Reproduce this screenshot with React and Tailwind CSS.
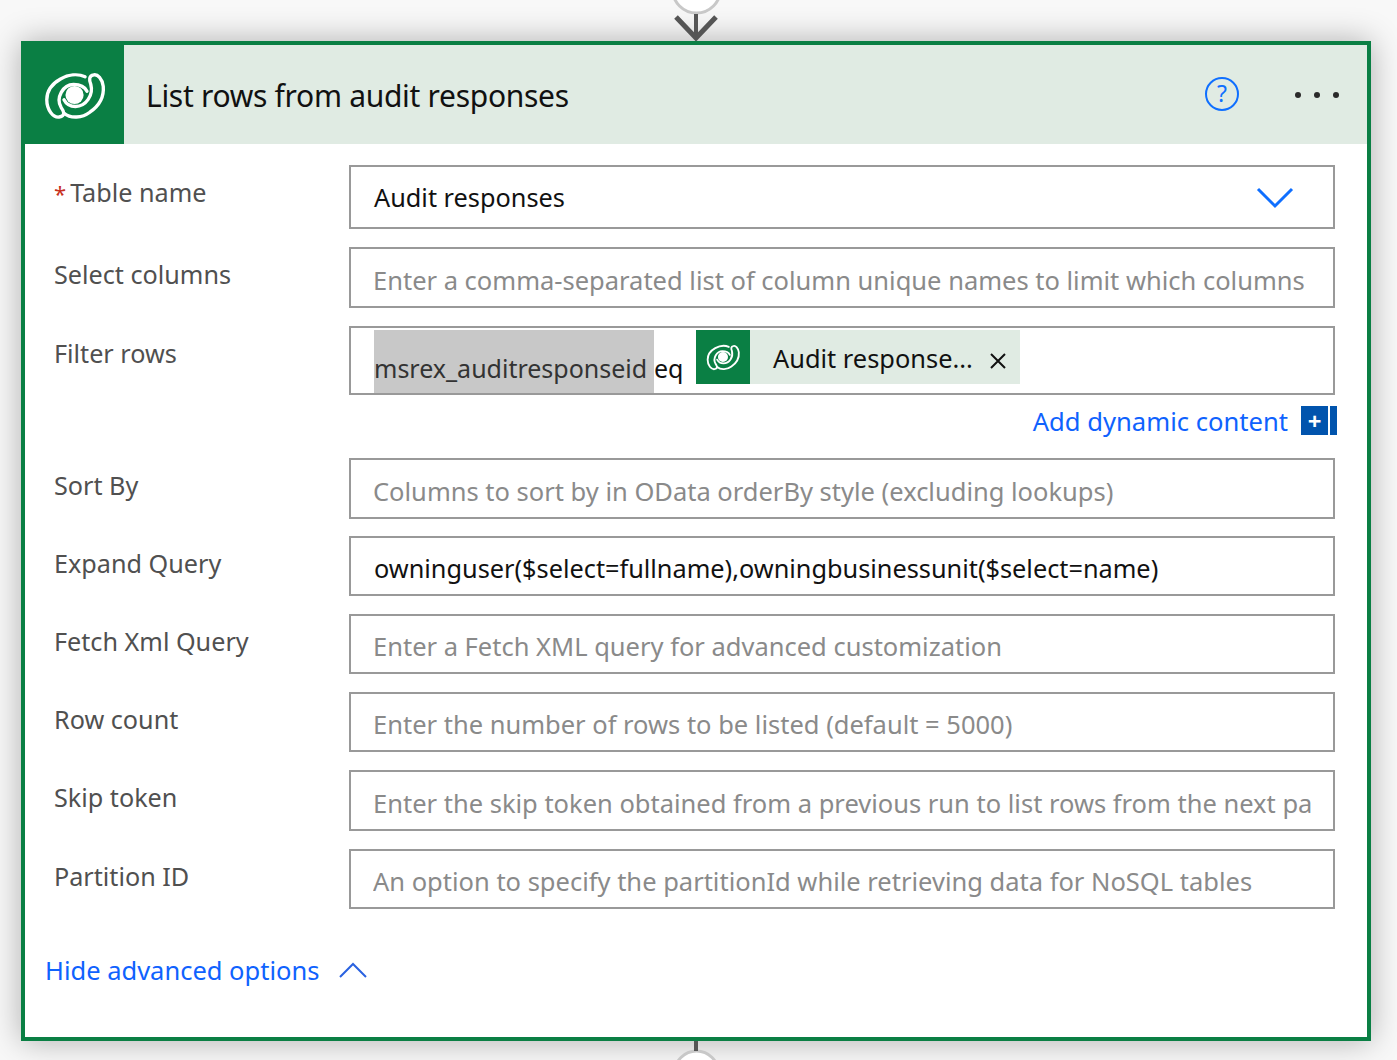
const font = { fontFamily: '"Noto Sans", "Open Sans", sans-serif' };

function DataverseLogo({ className }) {
  return (
    <svg viewBox="0 0 70 56" className={className} fill="none" stroke="#fff" strokeLinecap="round" strokeWidth="3.5">
      <path d="M45 9C30 2 5 14 5 33C5 44 12 52 18 51C25 50 23 45 20 41C14 31 22 17 33 17C40 17 45 20 47 24" />
      <path d="M23 47C30 53 42 52 50 46C60 39 65 30 64 19C63 11 58 6 54 7C49 8 49 12 51 17C54 28 46 40 35 40C29 40 25 37 23 33" />
      <circle cx="34" cy="28" r="9.5" fill="#fff" stroke="none" />
    </svg>
  );
}

function Field({ label, required, height, mt, bare, children }) {
  return (
    <div className="flex" style={{ marginTop: mt }}>
      <div className="w-[324px] shrink-0 pl-[29px] pt-[9px] text-[25.2px] leading-[36px] text-[#505050]">
        {required && <span className="mr-[4px] text-[22px] text-[#c8301e]">*</span>}
        {label}
      </div>
      <div
        className={`w-[986px] shrink-0 border-2 border-[#999999] bg-white ${bare ? "" : "pl-[23px] pr-[22px]"}`}
        style={{ height }}
      >
        {children}
      </div>
    </div>
  );
}

function Placeholder({ tall, children }) {
  return (
    <div className={`-ml-[1px] overflow-hidden whitespace-nowrap text-[25.5px] text-[#8a8a8a] ${tall ? "leading-[62px]" : "leading-[60px]"}`}>
      {children}
    </div>
  );
}

export default function App() {
  return (
    <div className="h-[1060px] w-[1397px] overflow-hidden bg-[#f8f8f8]" style={font}>
      <div className="flex h-[41px] justify-center overflow-hidden">
        <svg width="60" height="41" viewBox="0 0 60 41" fill="none">
          <circle cx="27.5" cy="-11" r="24" fill="#fff" stroke="#c8c8c8" strokeWidth="3" />
          <path d="M27 14V38" stroke="#555" strokeWidth="4" />
          <path d="M7 17L27 38L47 17" stroke="#555" strokeWidth="5" />
        </svg>
      </div>

      <div className="mx-[21px] h-[1000px] w-[1350px] border-4 border-[#0a7f44] bg-white shadow-[0_0_30px_rgba(0,0,0,0.3)]">
        <div className="flex h-[99px] items-center bg-[#e0ebe3]">
          <div className="flex h-full w-[99px] items-center justify-center bg-[#0a7f44]">
            <DataverseLogo className="ml-[1px] h-[54px] w-[67px]" />
          </div>
          <div className="ml-[22px] flex-1 pt-[2px] text-[30px] leading-[40px] tracking-[-0.3px] text-[#111]">List rows from audit responses</div>
          <svg width="36" height="36" viewBox="0 0 36 36" fill="none" className="mb-[2px] mr-[55px]">
            <circle cx="18" cy="18" r="16" stroke="#0f6fff" strokeWidth="2" />
            <text x="18" y="26" textAnchor="middle" fontSize="23" fill="#0f6fff">?</text>
          </svg>
          <div className="mr-[28px] flex gap-[13px]">
            <span className="h-[6px] w-[6px] rounded-full bg-[#2a2a2a]" />
            <span className="h-[6px] w-[6px] rounded-full bg-[#2a2a2a]" />
            <span className="h-[6px] w-[6px] rounded-full bg-[#2a2a2a]" />
          </div>
        </div>

        <Field label="Table name" required height={64} mt={21}>
          <div className="flex h-full items-center justify-between">
            <span className="pt-[2px] text-[25.3px] text-[#111]">Audit responses</span>
            <svg width="38" height="24" viewBox="0 0 38 24" fill="none" className="mr-[17px]">
              <path d="M2 4L19 21L36 4" stroke="#0f6fff" strokeWidth="3" />
            </svg>
          </div>
        </Field>

        <Field label="Select columns" height={61} mt={18}>
          <Placeholder tall>Enter a comma-separated list of column unique names to limit which columns are returned</Placeholder>
        </Field>

        <Field label="Filter rows" height={69} mt={18} bare>
          <div className="flex h-full items-start pl-[23px] pt-[2px] text-[25px] text-[#111]">
            <span className="h-[63px] w-[280px] bg-[#c8c8c8] pt-[18px] leading-[40px] text-[#333]">msrex_auditresponseid</span>
            <span className="w-[42px] pt-[18px] leading-[40px]">eq</span>
            <div className="flex h-[54px] w-[324px] items-center bg-[#e0ebe3]">
              <div className="flex h-full w-[54px] items-center justify-center bg-[#0a7f44]">
                <DataverseLogo className="h-[30px] w-[37px]" />
              </div>
              <span className="ml-[23px] w-[217px] pt-[2px] text-[25.4px] leading-[54px]">Audit response...</span>
              <svg width="16" height="16" viewBox="0 0 16 16" fill="none" className="mt-[8px]">
                <path d="M1 1L15 15M15 1L1 15" stroke="#111" strokeWidth="2" />
              </svg>
            </div>
          </div>
        </Field>

        <div className="flex h-[63px] items-start justify-end pr-[30px] pt-[10px]">
          <span className="mr-[13px] text-[25.6px] leading-[34px] text-[#0f62fe]">Add dynamic content</span>
          <div className="mt-[1px] flex h-[29px] items-center">
            <div className="flex h-full w-[27px] items-center justify-center bg-[#0154ad] text-[24px] font-bold leading-none text-white">+</div>
            <div className="ml-[2px] h-full w-[7px] bg-[#0154ad]" />
          </div>
        </div>

        <Field label="Sort By" height={61} mt={0}>
          <Placeholder tall>Columns to sort by in OData orderBy style (excluding lookups)</Placeholder>
        </Field>
        <Field label="Expand Query" height={60} mt={17}>
          <div className="overflow-hidden whitespace-nowrap text-[25.3px] leading-[60px] text-[#111]">
            owninguser($select=fullname),owningbusinessunit($select=name)
          </div>
        </Field>
        <Field label="Fetch Xml Query" height={60} mt={18}>
          <Placeholder>Enter a Fetch XML query for advanced customization</Placeholder>
        </Field>
        <Field label="Row count" height={60} mt={18}>
          <Placeholder>Enter the number of rows to be listed (default = 5000)</Placeholder>
        </Field>
        <Field label="Skip token" height={61} mt={18}>
          <Placeholder tall>Enter the skip token obtained from a previous run to list rows from the next page of data</Placeholder>
        </Field>
        <Field label="Partition ID" height={60} mt={18}>
          <Placeholder>An option to specify the partitionId while retrieving data for NoSQL tables</Placeholder>
        </Field>

        <div className="mt-[41px] flex items-center pl-[20px]">
          <span className="text-[25.5px] leading-[40px] text-[#0f62fe]">Hide advanced options</span>
          <svg width="30" height="18" viewBox="0 0 30 18" fill="none" className="ml-[19px]">
            <path d="M2 16L15 3L28 16" stroke="#2a62e0" strokeWidth="2" />
          </svg>
        </div>
      </div>

      <div className="flex h-[19px] justify-center overflow-hidden">
        <svg width="60" height="19" viewBox="0 0 60 19" fill="none">
          <circle cx="27.5" cy="32" r="22" fill="#fff" stroke="#c8c8c8" strokeWidth="3" />
          <path d="M27 0V10" stroke="#555" strokeWidth="4" />
        </svg>
      </div>
    </div>
  );
}
